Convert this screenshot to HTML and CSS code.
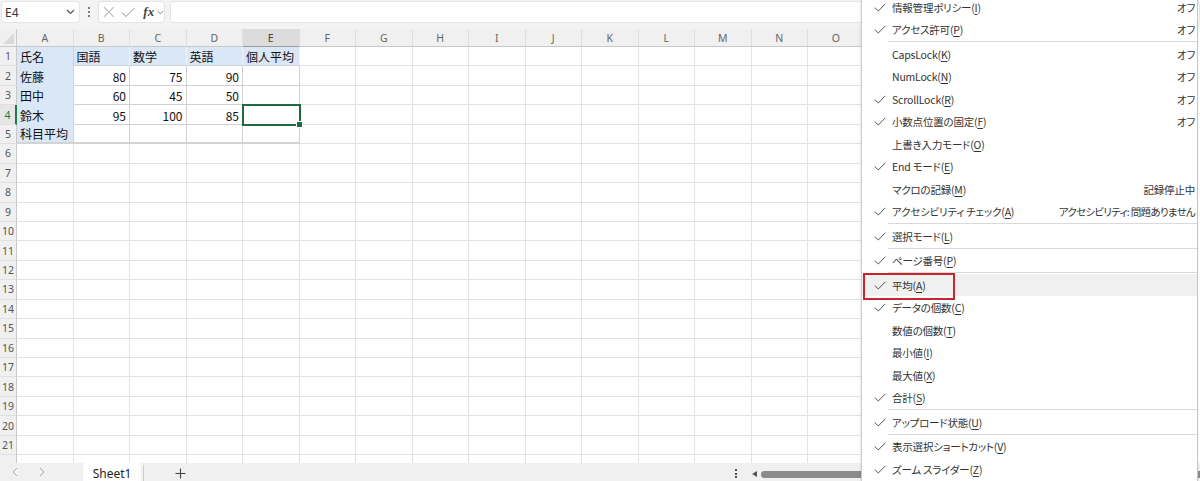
FILE: index.html
```html
<!DOCTYPE html>
<html lang="ja">
<head>
<meta charset="utf-8">
<title>Excel</title>
<link rel="stylesheet" href="styles.css">
</head>
<body>
<div class="app">
  <div class="fbar">
    <div class="namebox"><span>E4</span><svg class="chev" width="9" height="6" viewBox="0 0 9 6"><polyline points="1,1 4.5,4.5 8,1" fill="none" stroke="#555" stroke-width="1.2"/></svg></div>
    <div class="vdots"><i></i><i></i><i></i></div>
    <div class="fxbox">
      <svg width="12" height="12" viewBox="0 0 12 12"><path d="M1 1L11 11M11 1L1 11" stroke="#b9b9b9" stroke-width="1.1" fill="none"/></svg>
      <svg width="15" height="11" viewBox="0 0 15 11"><polyline points="1,5.5 5,9.5 14,1" stroke="#b9b9b9" stroke-width="1.1" fill="none"/></svg>
      <span class="fx">fx</span>
      <svg width="7" height="5" viewBox="0 0 7 5"><polyline points="0.5,0.8 3.5,4 6.5,0.8" fill="none" stroke="#8a8a8a" stroke-width="1"/></svg>
    </div>
    <div class="finput"></div>
  </div>

  <div class="sheet">
    <div class="grid">
      <div class="corner"></div><div class="ch">A</div><div class="ch">B</div><div class="ch">C</div><div class="ch">D</div><div class="ch selh">E</div><div class="ch">F</div><div class="ch">G</div><div class="ch">H</div><div class="ch">I</div><div class="ch">J</div><div class="ch">K</div><div class="ch">L</div><div class="ch">M</div><div class="ch">N</div><div class="ch">O</div>

      <div class="rh">1</div><div class="c t bl ba">氏名</div><div class="c t bl bh">国語</div><div class="c t bl bh">数学</div><div class="c t bl bh">英語</div><div class="c t bl bh">個人平均</div><i class="c"></i><i class="c"></i><i class="c"></i><i class="c"></i><i class="c"></i><i class="c"></i><i class="c"></i><i class="c"></i><i class="c"></i><i class="c"></i>
      <div class="rh">2</div><div class="c t bl ba">佐藤</div><div class="c t d n">80</div><div class="c t d n">75</div><div class="c t d n">90</div><div class="c t d"></div><i class="c"></i><i class="c"></i><i class="c"></i><i class="c"></i><i class="c"></i><i class="c"></i><i class="c"></i><i class="c"></i><i class="c"></i><i class="c"></i>
      <div class="rh">3</div><div class="c t bl ba">田中</div><div class="c t d n">60</div><div class="c t d n">45</div><div class="c t d n">50</div><div class="c t d"></div><i class="c"></i><i class="c"></i><i class="c"></i><i class="c"></i><i class="c"></i><i class="c"></i><i class="c"></i><i class="c"></i><i class="c"></i><i class="c"></i>
      <div class="rh selr">4</div><div class="c t bl ba">鈴木</div><div class="c t d n">95</div><div class="c t d n">100</div><div class="c t d n">85</div><div class="c t d sel"></div><i class="c"></i><i class="c"></i><i class="c"></i><i class="c"></i><i class="c"></i><i class="c"></i><i class="c"></i><i class="c"></i><i class="c"></i><i class="c"></i>
      <div class="rh">5</div><div class="c t bl ba last">科目平均</div><div class="c t d last"></div><div class="c t d last"></div><div class="c t d last"></div><div class="c t d last"></div><i class="c"></i><i class="c"></i><i class="c"></i><i class="c"></i><i class="c"></i><i class="c"></i><i class="c"></i><i class="c"></i><i class="c"></i><i class="c"></i>
      <div class="rh">6</div><i class="c"></i><i class="c"></i><i class="c"></i><i class="c"></i><i class="c"></i><i class="c"></i><i class="c"></i><i class="c"></i><i class="c"></i><i class="c"></i><i class="c"></i><i class="c"></i><i class="c"></i><i class="c"></i><i class="c"></i>
      <div class="rh">7</div><i class="c"></i><i class="c"></i><i class="c"></i><i class="c"></i><i class="c"></i><i class="c"></i><i class="c"></i><i class="c"></i><i class="c"></i><i class="c"></i><i class="c"></i><i class="c"></i><i class="c"></i><i class="c"></i><i class="c"></i>
      <div class="rh">8</div><i class="c"></i><i class="c"></i><i class="c"></i><i class="c"></i><i class="c"></i><i class="c"></i><i class="c"></i><i class="c"></i><i class="c"></i><i class="c"></i><i class="c"></i><i class="c"></i><i class="c"></i><i class="c"></i><i class="c"></i>
      <div class="rh">9</div><i class="c"></i><i class="c"></i><i class="c"></i><i class="c"></i><i class="c"></i><i class="c"></i><i class="c"></i><i class="c"></i><i class="c"></i><i class="c"></i><i class="c"></i><i class="c"></i><i class="c"></i><i class="c"></i><i class="c"></i>
      <div class="rh">10</div><i class="c"></i><i class="c"></i><i class="c"></i><i class="c"></i><i class="c"></i><i class="c"></i><i class="c"></i><i class="c"></i><i class="c"></i><i class="c"></i><i class="c"></i><i class="c"></i><i class="c"></i><i class="c"></i><i class="c"></i>
      <div class="rh">11</div><i class="c"></i><i class="c"></i><i class="c"></i><i class="c"></i><i class="c"></i><i class="c"></i><i class="c"></i><i class="c"></i><i class="c"></i><i class="c"></i><i class="c"></i><i class="c"></i><i class="c"></i><i class="c"></i><i class="c"></i>
      <div class="rh">12</div><i class="c"></i><i class="c"></i><i class="c"></i><i class="c"></i><i class="c"></i><i class="c"></i><i class="c"></i><i class="c"></i><i class="c"></i><i class="c"></i><i class="c"></i><i class="c"></i><i class="c"></i><i class="c"></i><i class="c"></i>
      <div class="rh">13</div><i class="c"></i><i class="c"></i><i class="c"></i><i class="c"></i><i class="c"></i><i class="c"></i><i class="c"></i><i class="c"></i><i class="c"></i><i class="c"></i><i class="c"></i><i class="c"></i><i class="c"></i><i class="c"></i><i class="c"></i>
      <div class="rh">14</div><i class="c"></i><i class="c"></i><i class="c"></i><i class="c"></i><i class="c"></i><i class="c"></i><i class="c"></i><i class="c"></i><i class="c"></i><i class="c"></i><i class="c"></i><i class="c"></i><i class="c"></i><i class="c"></i><i class="c"></i>
      <div class="rh">15</div><i class="c"></i><i class="c"></i><i class="c"></i><i class="c"></i><i class="c"></i><i class="c"></i><i class="c"></i><i class="c"></i><i class="c"></i><i class="c"></i><i class="c"></i><i class="c"></i><i class="c"></i><i class="c"></i><i class="c"></i>
      <div class="rh">16</div><i class="c"></i><i class="c"></i><i class="c"></i><i class="c"></i><i class="c"></i><i class="c"></i><i class="c"></i><i class="c"></i><i class="c"></i><i class="c"></i><i class="c"></i><i class="c"></i><i class="c"></i><i class="c"></i><i class="c"></i>
      <div class="rh">17</div><i class="c"></i><i class="c"></i><i class="c"></i><i class="c"></i><i class="c"></i><i class="c"></i><i class="c"></i><i class="c"></i><i class="c"></i><i class="c"></i><i class="c"></i><i class="c"></i><i class="c"></i><i class="c"></i><i class="c"></i>
      <div class="rh">18</div><i class="c"></i><i class="c"></i><i class="c"></i><i class="c"></i><i class="c"></i><i class="c"></i><i class="c"></i><i class="c"></i><i class="c"></i><i class="c"></i><i class="c"></i><i class="c"></i><i class="c"></i><i class="c"></i><i class="c"></i>
      <div class="rh">19</div><i class="c"></i><i class="c"></i><i class="c"></i><i class="c"></i><i class="c"></i><i class="c"></i><i class="c"></i><i class="c"></i><i class="c"></i><i class="c"></i><i class="c"></i><i class="c"></i><i class="c"></i><i class="c"></i><i class="c"></i>
      <div class="rh">20</div><i class="c"></i><i class="c"></i><i class="c"></i><i class="c"></i><i class="c"></i><i class="c"></i><i class="c"></i><i class="c"></i><i class="c"></i><i class="c"></i><i class="c"></i><i class="c"></i><i class="c"></i><i class="c"></i><i class="c"></i>
      <div class="rh">21</div><i class="c"></i><i class="c"></i><i class="c"></i><i class="c"></i><i class="c"></i><i class="c"></i><i class="c"></i><i class="c"></i><i class="c"></i><i class="c"></i><i class="c"></i><i class="c"></i><i class="c"></i><i class="c"></i><i class="c"></i>
      <div class="rh"></div><i class="c"></i><i class="c"></i><i class="c"></i><i class="c"></i><i class="c"></i><i class="c"></i><i class="c"></i><i class="c"></i><i class="c"></i><i class="c"></i><i class="c"></i><i class="c"></i><i class="c"></i><i class="c"></i><i class="c"></i>
    </div>
  </div>

  <div class="tabs">
    <div class="navs">
      <svg width="6" height="10" viewBox="0 0 6 10"><polyline points="5,1 1,5 5,9" fill="none" stroke="#a8a8a8" stroke-width="1"/></svg>
      <svg width="6" height="10" viewBox="0 0 6 10"><polyline points="1,1 5,5 1,9" fill="none" stroke="#a8a8a8" stroke-width="1"/></svg>
    </div>
    <div class="tab">Sheet1</div>
    <div class="tabsep"></div>
    <div class="plus"><svg width="11" height="11" viewBox="0 0 11 11"><path d="M5.5 0.5V10.5M0.5 5.5H10.5" stroke="#444" stroke-width="1.1"/></svg></div>
    <div class="tabfill"></div>
    <div class="hdots"><i></i><i></i><i></i></div>
    <div class="larrow"></div>
    <div class="thumb"></div>
  </div>
</div>

<div class="menu">
  <div class="mlist">
    <div class="mi"><span class="ck"><svg width="12" height="9" viewBox="0 0 12 9"><polyline points="0.8,4.6 4.3,8 11.3,0.8" fill="none" stroke="#555" stroke-width="1"/></svg></span><span class="lb">情報管理ポリシー(<u>I</u>)</span><span class="val">オフ</span></div>
    <div class="mi"><span class="ck"><svg width="12" height="9" viewBox="0 0 12 9"><polyline points="0.8,4.6 4.3,8 11.3,0.8" fill="none" stroke="#555" stroke-width="1"/></svg></span><span class="lb">アクセス許可(<u>P</u>)</span><span class="val">オフ</span></div>
    <div class="sep"></div>
    <div class="mi"><span class="ck"></span><span class="lb">CapsLock(<u>K</u>)</span><span class="val">オフ</span></div>
    <div class="mi"><span class="ck"></span><span class="lb">NumLock(<u>N</u>)</span><span class="val">オフ</span></div>
    <div class="mi"><span class="ck"><svg width="12" height="9" viewBox="0 0 12 9"><polyline points="0.8,4.6 4.3,8 11.3,0.8" fill="none" stroke="#555" stroke-width="1"/></svg></span><span class="lb">ScrollLock(<u>R</u>)</span><span class="val">オフ</span></div>
    <div class="mi"><span class="ck"><svg width="12" height="9" viewBox="0 0 12 9"><polyline points="0.8,4.6 4.3,8 11.3,0.8" fill="none" stroke="#555" stroke-width="1"/></svg></span><span class="lb">小数点位置の固定(<u>F</u>)</span><span class="val">オフ</span></div>
    <div class="mi"><span class="ck"></span><span class="lb">上書き入力モード(<u>O</u>)</span><span class="val"></span></div>
    <div class="mi"><span class="ck"><svg width="12" height="9" viewBox="0 0 12 9"><polyline points="0.8,4.6 4.3,8 11.3,0.8" fill="none" stroke="#555" stroke-width="1"/></svg></span><span class="lb">End モード(<u>E</u>)</span><span class="val"></span></div>
    <div class="mi"><span class="ck"></span><span class="lb">マクロの記録(<u>M</u>)</span><span class="val">記録停止中</span></div>
    <div class="mi"><span class="ck"><svg width="12" height="9" viewBox="0 0 12 9"><polyline points="0.8,4.6 4.3,8 11.3,0.8" fill="none" stroke="#555" stroke-width="1"/></svg></span><span class="lb">アクセシビリティ チェック(<u>A</u>)</span><span class="val narrow">アクセシビリティ: 問題ありません</span></div>
    <div class="sep"></div>
    <div class="mi"><span class="ck"><svg width="12" height="9" viewBox="0 0 12 9"><polyline points="0.8,4.6 4.3,8 11.3,0.8" fill="none" stroke="#555" stroke-width="1"/></svg></span><span class="lb">選択モード(<u>L</u>)</span><span class="val"></span></div>
    <div class="sep"></div>
    <div class="mi"><span class="ck"><svg width="12" height="9" viewBox="0 0 12 9"><polyline points="0.8,4.6 4.3,8 11.3,0.8" fill="none" stroke="#555" stroke-width="1"/></svg></span><span class="lb">ページ番号(<u>P</u>)</span><span class="val"></span></div>
    <div class="sep"></div>
    <div class="mi hl"><span class="ck"><svg width="12" height="9" viewBox="0 0 12 9"><polyline points="0.8,4.6 4.3,8 11.3,0.8" fill="none" stroke="#555" stroke-width="1"/></svg></span><span class="lb">平均(<u>A</u>)</span><span class="val"></span></div>
    <div class="mi"><span class="ck"><svg width="12" height="9" viewBox="0 0 12 9"><polyline points="0.8,4.6 4.3,8 11.3,0.8" fill="none" stroke="#555" stroke-width="1"/></svg></span><span class="lb">データの個数(<u>C</u>)</span><span class="val"></span></div>
    <div class="mi"><span class="ck"></span><span class="lb">数値の個数(<u>T</u>)</span><span class="val"></span></div>
    <div class="mi"><span class="ck"></span><span class="lb">最小値(<u>I</u>)</span><span class="val"></span></div>
    <div class="mi"><span class="ck"></span><span class="lb">最大値(<u>X</u>)</span><span class="val"></span></div>
    <div class="mi"><span class="ck"><svg width="12" height="9" viewBox="0 0 12 9"><polyline points="0.8,4.6 4.3,8 11.3,0.8" fill="none" stroke="#555" stroke-width="1"/></svg></span><span class="lb">合計(<u>S</u>)</span><span class="val"></span></div>
    <div class="sep"></div>
    <div class="mi"><span class="ck"><svg width="12" height="9" viewBox="0 0 12 9"><polyline points="0.8,4.6 4.3,8 11.3,0.8" fill="none" stroke="#555" stroke-width="1"/></svg></span><span class="lb">アップロード状態(<u>U</u>)</span><span class="val"></span></div>
    <div class="sep"></div>
    <div class="mi"><span class="ck"><svg width="12" height="9" viewBox="0 0 12 9"><polyline points="0.8,4.6 4.3,8 11.3,0.8" fill="none" stroke="#555" stroke-width="1"/></svg></span><span class="lb">表示選択ショートカット(<u>V</u>)</span><span class="val"></span></div>
    <div class="mi"><span class="ck"><svg width="12" height="9" viewBox="0 0 12 9"><polyline points="0.8,4.6 4.3,8 11.3,0.8" fill="none" stroke="#555" stroke-width="1"/></svg></span><span class="lb">ズーム スライダー(<u>Z</u>)</span><span class="val"></span></div>
  </div>
</div>
</body>
</html>
```

FILE: styles.css
```css
* { box-sizing: border-box; }
html, body { margin: 0; padding: 0; }
body {
  width: 1200px;
  height: 481px;
  overflow: hidden;
  position: relative;
  background: #ffffff;
  font-family: "Noto Sans CJK JP", "Noto Sans", sans-serif;
  color: #222;
}
.app {
  width: 1200px;
  height: 481px;
  display: flex;
  flex-direction: column;
}

/* formula bar */
.fbar {
  height: 29px;
  flex: none;
  background: #f3f3f3;
  display: flex;
  align-items: flex-start;
  padding: 1px 0 0 1px;
}
.namebox {
  width: 79px;
  height: 22px;
  background: #fff;
  border: 1px solid #e4e4e4;
  border-radius: 4px;
  display: flex;
  align-items: center;
  justify-content: space-between;
  padding: 0 4px 0 3px;
  font-family: "Noto Sans", sans-serif;
  font-size: 12px;
  color: #333;
}
.vdots {
  width: 18px;
  height: 22px;
  display: flex;
  flex-direction: column;
  align-items: center;
  justify-content: center;
  gap: 2px;
}
.vdots i {
  display: block;
  width: 2px;
  height: 2px;
  background: #555;
  border-radius: 1px;
}
.fxbox {
  width: 67px;
  height: 22px;
  background: #fff;
  border: 1px solid #e4e4e4;
  border-radius: 4px;
  display: flex;
  align-items: center;
  padding-left: 4px;
  gap: 6px;
}
.fx {
  font-family: "Liberation Serif", serif;
  font-style: italic;
  font-weight: bold;
  font-size: 13px;
  color: #444;
  margin-left: 2px;
  margin-right: -3px;
}
.finput {
  flex: 1;
  height: 22px;
  margin-left: 5px;
  background: #fff;
  border: 1px solid #e4e4e4;
  border-radius: 4px;
}

/* sheet */
.sheet {
  flex: 1;
  overflow: hidden;
  background: #fff;
}
.grid {
  display: grid;
  grid-template-columns: 17px repeat(15, 56.5px);
  grid-template-rows: 18px repeat(22, 19.45px);
}
.corner {
  background: #f0f0f0;
  border-right: 1px solid #c9c9c9;
  border-bottom: 1px solid #c9c9c9;
  position: relative;
}
.corner::after {
  content: "";
  position: absolute;
  right: 2px;
  bottom: 2px;
  width: 0;
  height: 0;
  border-left: 11px solid transparent;
  border-bottom: 11px solid #d9d9d9;
}
.ch {
  background: #f0f0f0;
  border-right: 1px solid #dedede;
  border-bottom: 1px solid #c9c9c9;
  display: flex;
  align-items: center;
  justify-content: center;
  font-family: "Noto Sans", sans-serif;
  font-size: 10.5px;
  color: #666;
}
.ch.selh {
  background: #dcdcdc;
  border-bottom: 1px solid #9e9e9e;
  color: #444;
}
.rh {
  background: #f0f0f0;
  border-right: 1px solid #c9c9c9;
  border-bottom: 1px solid #e0e0e0;
  display: flex;
  align-items: center;
  justify-content: center;
  font-family: "Noto Sans", sans-serif;
  font-size: 10.5px;
  color: #555;
}
.rh.selr {
  color: #107c41;
  border-right: 2px solid #1d7a46;
  background: #e6e6e6;
}
.c {
  display: block;
  border-right: 1px solid #e3e3e3;
  border-bottom: 1px solid #e3e3e3;
}
.t {
  display: flex;
  align-items: center;
  padding: 1px 3px 0 3px;
  font-size: 12px;
  color: #111;
  white-space: nowrap;
}
.n { justify-content: flex-end; }
.bl { background: #dae7f6; }
.ba { border-right-color: #d0d0d0; border-bottom-color: #dae7f6; }
.bh { border-right-color: #eef3fa; border-bottom-color: #d0d0d0; }
.d { border-right-color: #d0d0d0; border-bottom-color: #d0d0d0; background: #fff; }
.last { border-bottom: 2px solid #d3d3d3; }
.ba.last { border-bottom: 2px solid #d3d3d3; }
.sel {
  position: relative;
  z-index: 1;
  outline: 2px solid #1d6b3e;
  outline-offset: -1px;
}
.sel::after {
  content: "";
  position: absolute;
  right: -4px;
  bottom: -4px;
  width: 5px;
  height: 5px;
  background: #1d6b3e;
  border: 1px solid #fff;
}

/* tabs */
.tabs {
  height: 18px;
  flex: none;
  background: #f0f0f0;
  display: flex;
  align-items: stretch;
}
.navs {
  width: 83px;
  display: flex;
  align-items: center;
  gap: 21px;
  padding-left: 12px;
}
.tab {
  width: 58px;
  background: #fff;
  display: flex;
  align-items: center;
  justify-content: center;
  font-family: "Noto Sans", sans-serif;
  font-size: 12px;
  color: #222;
  padding-top: 2px;
}
.tabsep {
  width: 1px;
  background: #cfcfcf;
  margin: 2px 0 0 2px;
}
.plus {
  width: 74px;
  display: flex;
  align-items: center;
  padding-left: 31px;
  padding-top: 3px;
}
.tabfill { flex: 0 0 511px; }
.hdots {
  width: 14px;
  display: flex;
  flex-direction: column;
  align-items: center;
  justify-content: center;
  gap: 1.5px;
  padding-top: 3px;
}
.hdots i {
  display: block;
  width: 2px;
  height: 2px;
  background: #555;
}
.larrow {
  width: 0;
  height: 0;
  margin: 8px 0 0 9px;
  border-top: 3.5px solid transparent;
  border-bottom: 3.5px solid transparent;
  border-right: 5px solid #555;
}
.thumb {
  flex: 1;
  margin: 8px 0 3px 4px;
  background: #8a8a8a;
  border-radius: 4px 0 0 4px;
}

/* menu */
.menu {
  position: absolute;
  left: 861px;
  top: 0;
  width: 337px;
  height: 481px;
  background: #fff;
  border-left: 1px solid #cdcdcd;
  border-right: 1px solid #c4c4c4;
  box-shadow: -1px 0 3px rgba(0,0,0,0.08);
  overflow: hidden;
  font-family: "Noto Sans CJK JP", sans-serif;
  font-size: 10.5px;
  letter-spacing: -0.2px;
  color: #333;
  font-feature-settings: "palt";
}
.mlist {
  margin-top: -4.25px;
}
.mi {
  height: 22.5px;
  display: flex;
  align-items: center;
  padding-right: 2px;
  position: relative;
  white-space: nowrap;
}
.ck {
  width: 30px;
  flex: none;
  display: flex;
  align-items: center;
  padding-left: 12px;
}
.ck svg { display: block; }
.lb { flex: 1; }
.lb u { text-underline-offset: 2px; }
.val { text-align: right; }
.val.narrow { letter-spacing: -0.7px; }
.sep {
  height: 1px;
  margin: 0.5px 0 0.5px 26px;
  background: #dadada;
}
.mi.hl { background: #f0f0f0; }
.mi.hl::after {
  content: "";
  position: absolute;
  left: 1px;
  top: -1px;
  width: 88px;
  height: 23px;
  border: 2px solid #c9252e;
}
```
